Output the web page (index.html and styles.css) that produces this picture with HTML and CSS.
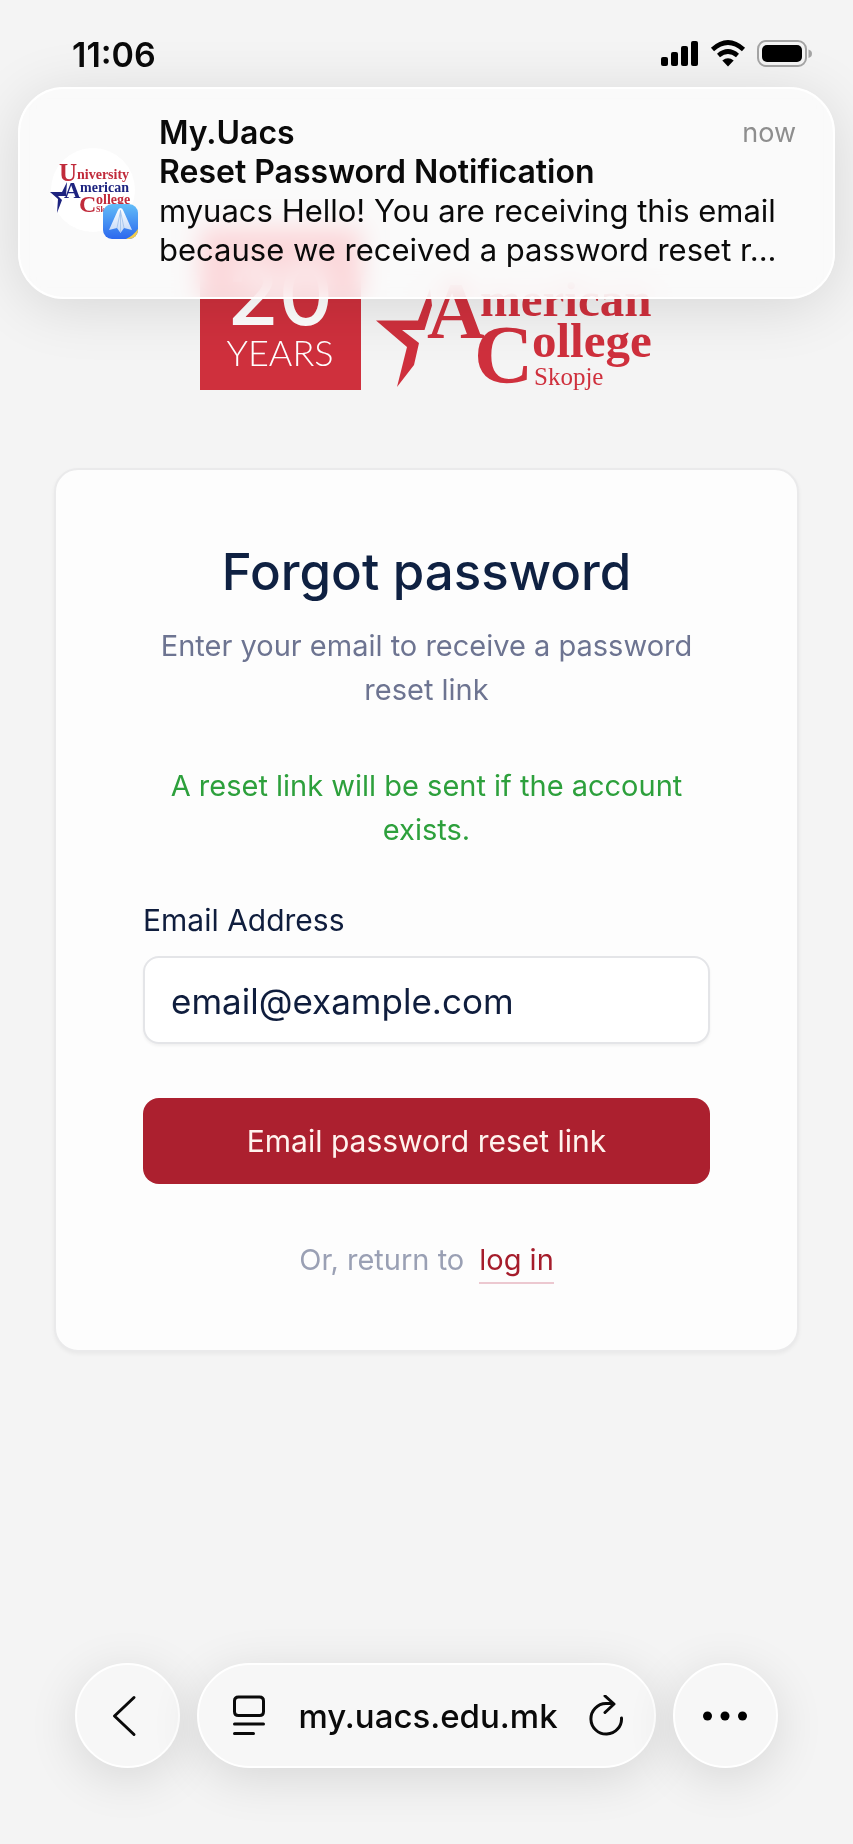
FILE: index.html
```html
<!DOCTYPE html>
<html lang="en">
<head>
<meta charset="utf-8">
<meta name="viewport" content="width=device-width, initial-scale=1">
<title>Forgot password</title>
<link rel="stylesheet" href="styles.css">
</head>
<body>
<header class="status">
  <time class="clock">11:06</time>
  <div class="indicators">
    <svg width="38" height="28" viewBox="0 0 38 28" aria-hidden="true"><rect x="0" y="17" width="7" height="9" rx="2"/><rect x="10" y="12" width="7" height="14" rx="2"/><rect x="20" y="6" width="7" height="20" rx="2"/><rect x="30" y="1" width="7" height="25" rx="2"/></svg>
    <svg width="36" height="28" viewBox="0 0 36 28" aria-hidden="true"><path d="M2.500 9.500Q18-4.500 33.500 9.500M8.500 15.500Q18 7.500 27.500 15.500" fill="none" stroke="#000" stroke-width="4.600"/><path d="M12.300 20.500Q18 16 23.700 20.500L18 26.500Z"/></svg>
    <svg width="56" height="28" viewBox="0 0 56 28" aria-hidden="true"><rect x="1" y="1" width="48" height="25" rx="8" fill="none" stroke="#a5a5a5" stroke-width="2"/><rect x="5" y="5" width="40" height="17" rx="5"/><path d="M51.500 9.500q3.500 1 3.500 4.200t-3.500 4.200z" fill="#a5a5a5"/></svg>
  </div>
</header>

<aside class="notification">
  <div class="app-icon">
    <svg width="96" height="96" viewBox="0 0 96 96" role="img" aria-label="University American College Skopje">
      <defs>
        <linearGradient id="sky" x1="0" y1="0" x2="0" y2="1"><stop offset="0" stop-color="#62bdf8"/><stop offset="1" stop-color="#2c68ee"/></linearGradient>
        <linearGradient id="plane" x1="0" y1="0" x2="0" y2="1"><stop offset="0" stop-color="#fff"/><stop offset="1" stop-color="#c2d8f8"/></linearGradient>
        <clipPath id="badge"><rect x="53" y="61" width="35" height="35" rx="9"/></clipPath>
      </defs>
      <circle cx="43" cy="47" r="42" fill="#fff"/>
      <g font-family="Liberation Serif, serif" font-weight="700">
        <g fill="#c12b3b"><text x="9" y="38" font-size="25">U</text><text x="27" y="36" font-size="14">niversity</text><text x="29" y="69" font-size="24">C</text><text x="46" y="61" font-size="14">ollege</text><text x="46" y="69" font-size="8">Skopje</text></g>
        <g fill="#1d237f"><text x="14" y="55" font-size="23">A</text><text x="30" y="49" font-size="14">merican</text><path d="M0 49h12l5-10-1 14h-8l4 4-5 13 1-14z"/></g>
      </g>
      <g clip-path="url(#badge)"><path d="M53 61h35v35H53z" fill="url(#sky)"/><path d="M88 86v10H76q7-3 12-10z" fill="#f3cc4a"/><path d="M70.500 65q2 0 3 3L82 87l-8-2-3.500 5-3.500-5-8 2 8.500-19q1-3 3-3z" fill="url(#plane)"/><path d="M70.500 67v22M67 85l3.500-17L74 85" fill="none" stroke="#9dbfe9" stroke-width=".8"/></g>
    </svg>
  </div>
  <div class="message">
    <div class="message-head"><strong>My.Uacs</strong><span class="when">now</span></div>
    <strong>Reset Password Notification</strong>
    <p>myuacs Hello! You are receiving this email because we received a password reset r...</p>
  </div>
</aside>

<main class="page">
  <svg class="logo" width="456" height="166" viewBox="200 228 456 166" role="img" aria-label="20 Years, University American College Skopje">
    <rect x="201" y="228" width="161" height="162" fill="#cf303d"/>
    <g fill="#fff"><text x="281" y="325" text-anchor="middle" class="logo-number">20</text><text x="281" y="366" text-anchor="middle" class="logo-years">YEARS</text></g>
    <g class="logo-name">
      <path d="M377 320.500h42l12-32 2 17-7.500 24.500H403l17 13-5 22-17 22 10-40z"/>
      <text x="428" y="338" font-size="80">A</text><text x="481" y="316" font-size="49">merican</text>
      <text x="475" y="382" font-size="82">C</text><text x="533" y="357" font-size="49">ollege</text>
      <text x="535" y="385" font-size="25" font-weight="400">Skopje</text>
    </g>
  </svg>

  <section class="card">
    <h1>Forgot password</h1>
    <p class="intro">Enter your email to receive a password reset link</p>
    <p class="success" role="status">A reset link will be sent if the account exists.</p>
    <form>
      <label for="email">Email Address</label>
      <input id="email" type="email" value="email@example.com">
      <button class="submit" type="button">Email password reset link</button>
    </form>
    <p class="return"><span>Or, return to</span><a href="#">log in</a></p>
  </section>
</main>

<nav class="browser-bar" aria-label="Browser">
  <button class="glass round" type="button" aria-label="Back"><svg width="44" height="44" viewBox="0 0 44 44"><path d="M28 3.500 8.500 22 28 40.500" class="line"/></svg></button>
  <div class="glass address">
    <button type="button" aria-label="Page menu"><svg width="36" height="42" viewBox="0 0 36 42"><path d="M6.500 2h21q4 0 4 4v10.500q0 4-4 4h-21q-4 0-4-4V6q0-4 4-4zM2.500 29h29M2.500 38.500h19" class="line"/></svg></button>
    <span class="url">my.uacs.edu.mk</span>
    <button type="button" aria-label="Reload"><svg width="36" height="42" viewBox="0 0 36 42"><path d="M25.500 8.500H18A15.300 15.300 0 1 0 33.500 23M17 1l9 8-9 8.500" class="line"/></svg></button>
  </div>
  <button class="glass round" type="button" aria-label="More"><svg width="46" height="12" viewBox="0 0 46 12"><circle cx="4.500" cy="6" r="4.500"/><circle cx="22" cy="6" r="4.500"/><circle cx="39.500" cy="6" r="4.500"/></svg></button>
</nav>
</body>
</html>
```
FILE: styles.css
```css
* { box-sizing: border-box; }

body {
  margin: 0;
  min-height: 100vh;
  display: flex;
  flex-direction: column;
  background: #f4f4f4;
  color: #0a0a0a;
  font-family: Inter, "Liberation Sans", sans-serif;
}

h1, p { margin: 0; }

svg { display: block; flex: none; }

button {
  padding: 0;
  border: 0;
  background: none;
  color: inherit;
  font: inherit;
}

.line {
  fill: none;
  stroke: #0a0a0a;
  stroke-width: 3;
  stroke-linecap: round;
  stroke-linejoin: round;
}

.status {
  display: flex;
  justify-content: space-between;
  align-items: center;
  height: 88px;
  padding: 20px 40px 0 72px;
}

.clock {
  font-size: 34px;
  font-weight: 600;
}

.indicators {
  display: flex;
  gap: 11px;
}

.notification {
  position: absolute;
  z-index: 1;
  top: 87px;
  left: 18px;
  right: 18px;
  display: flex;
  align-items: center;
  gap: 13px;
  padding: 24px 37px 28px 30px;
  border: 2px solid #fff;
  border-radius: 46px;
  background: rgba(250, 250, 250, 0.84);
  backdrop-filter: blur(12px) saturate(1.4);
  box-shadow: 0 8px 60px rgba(0, 0, 0, 0.12);
}

.message {
  flex: 1;
  font-size: 31px;
  line-height: 39px;
}

.message strong {
  display: block;
  font-size: 32px;
  font-weight: 600;
}

.message-head {
  display: flex;
  justify-content: space-between;
}

.when {
  color: #8e8e8e;
  font-size: 27px;
}

.page {
  display: flex;
  flex-direction: column;
  align-items: center;
  gap: 74px;
  padding: 140px 54px 40px;
}

.logo-number {
  font: 500 84px Inter, sans-serif;
}

.logo-years {
  font: 300 36px Lato, sans-serif;
}

.logo-name {
  fill: #cf303d;
  font-family: "Liberation Serif", serif;
  font-weight: 700;
}

.card {
  width: 100%;
  max-width: 745px;
  padding: 70px 87px 66px;
  border: 2px solid #eaeaeb;
  border-radius: 24px;
  background: #fdfdfd;
  box-shadow: 0 2px 4px rgba(0, 0, 0, 0.05);
  font-size: 29px;
  line-height: 44px;
  text-align: center;
}

h1 {
  color: #0f2142;
  font-size: 51px;
  font-weight: 500;
  line-height: 64px;
}

.intro {
  margin-top: 20px;
  color: #6d7491;
}

.success {
  margin-top: 52px;
  color: #2da03c;
}

form {
  display: flex;
  flex-direction: column;
  margin-top: 46px;
  font-size: 30px;
  text-align: left;
}

label {
  color: #0f1d3d;
}

input {
  width: 100%;
  height: 88px;
  margin-top: 14px;
  padding: 2px 26px 0;
  border: 2px solid #e4e5e8;
  border-radius: 16px;
  background: #fff;
  box-shadow: 0 2px 3px rgba(0, 0, 0, 0.05);
  color: #0f1d3d;
  font: 35px Inter, sans-serif;
}

.submit {
  height: 86px;
  margin-top: 54px;
  border-radius: 16px;
  background: #ac202f;
  color: #fff3ee;
}

.return {
  display: flex;
  justify-content: center;
  gap: 15px;
  margin-top: 54px;
  color: #9aa0b4;
}

.return a {
  border-bottom: 2px solid #ecc8d0;
  color: #a51c2b;
  text-decoration: none;
}

.browser-bar {
  display: flex;
  justify-content: center;
  gap: 17px;
  margin-top: auto;
  padding: 40px 75px 76px;
}

.glass {
  height: 105px;
  border: 2px solid #fff;
  border-radius: 53px;
  background: #f7f7f7;
  box-shadow: 0 10px 50px rgba(0, 0, 0, 0.12);
}

.round {
  display: grid;
  place-items: center;
  flex: none;
  width: 105px;
}

.address {
  display: flex;
  flex: 1;
  justify-content: space-between;
  align-items: center;
  padding: 0 30px 0 33px;
}

.url {
  font-size: 33px;
  font-weight: 500;
}
```
